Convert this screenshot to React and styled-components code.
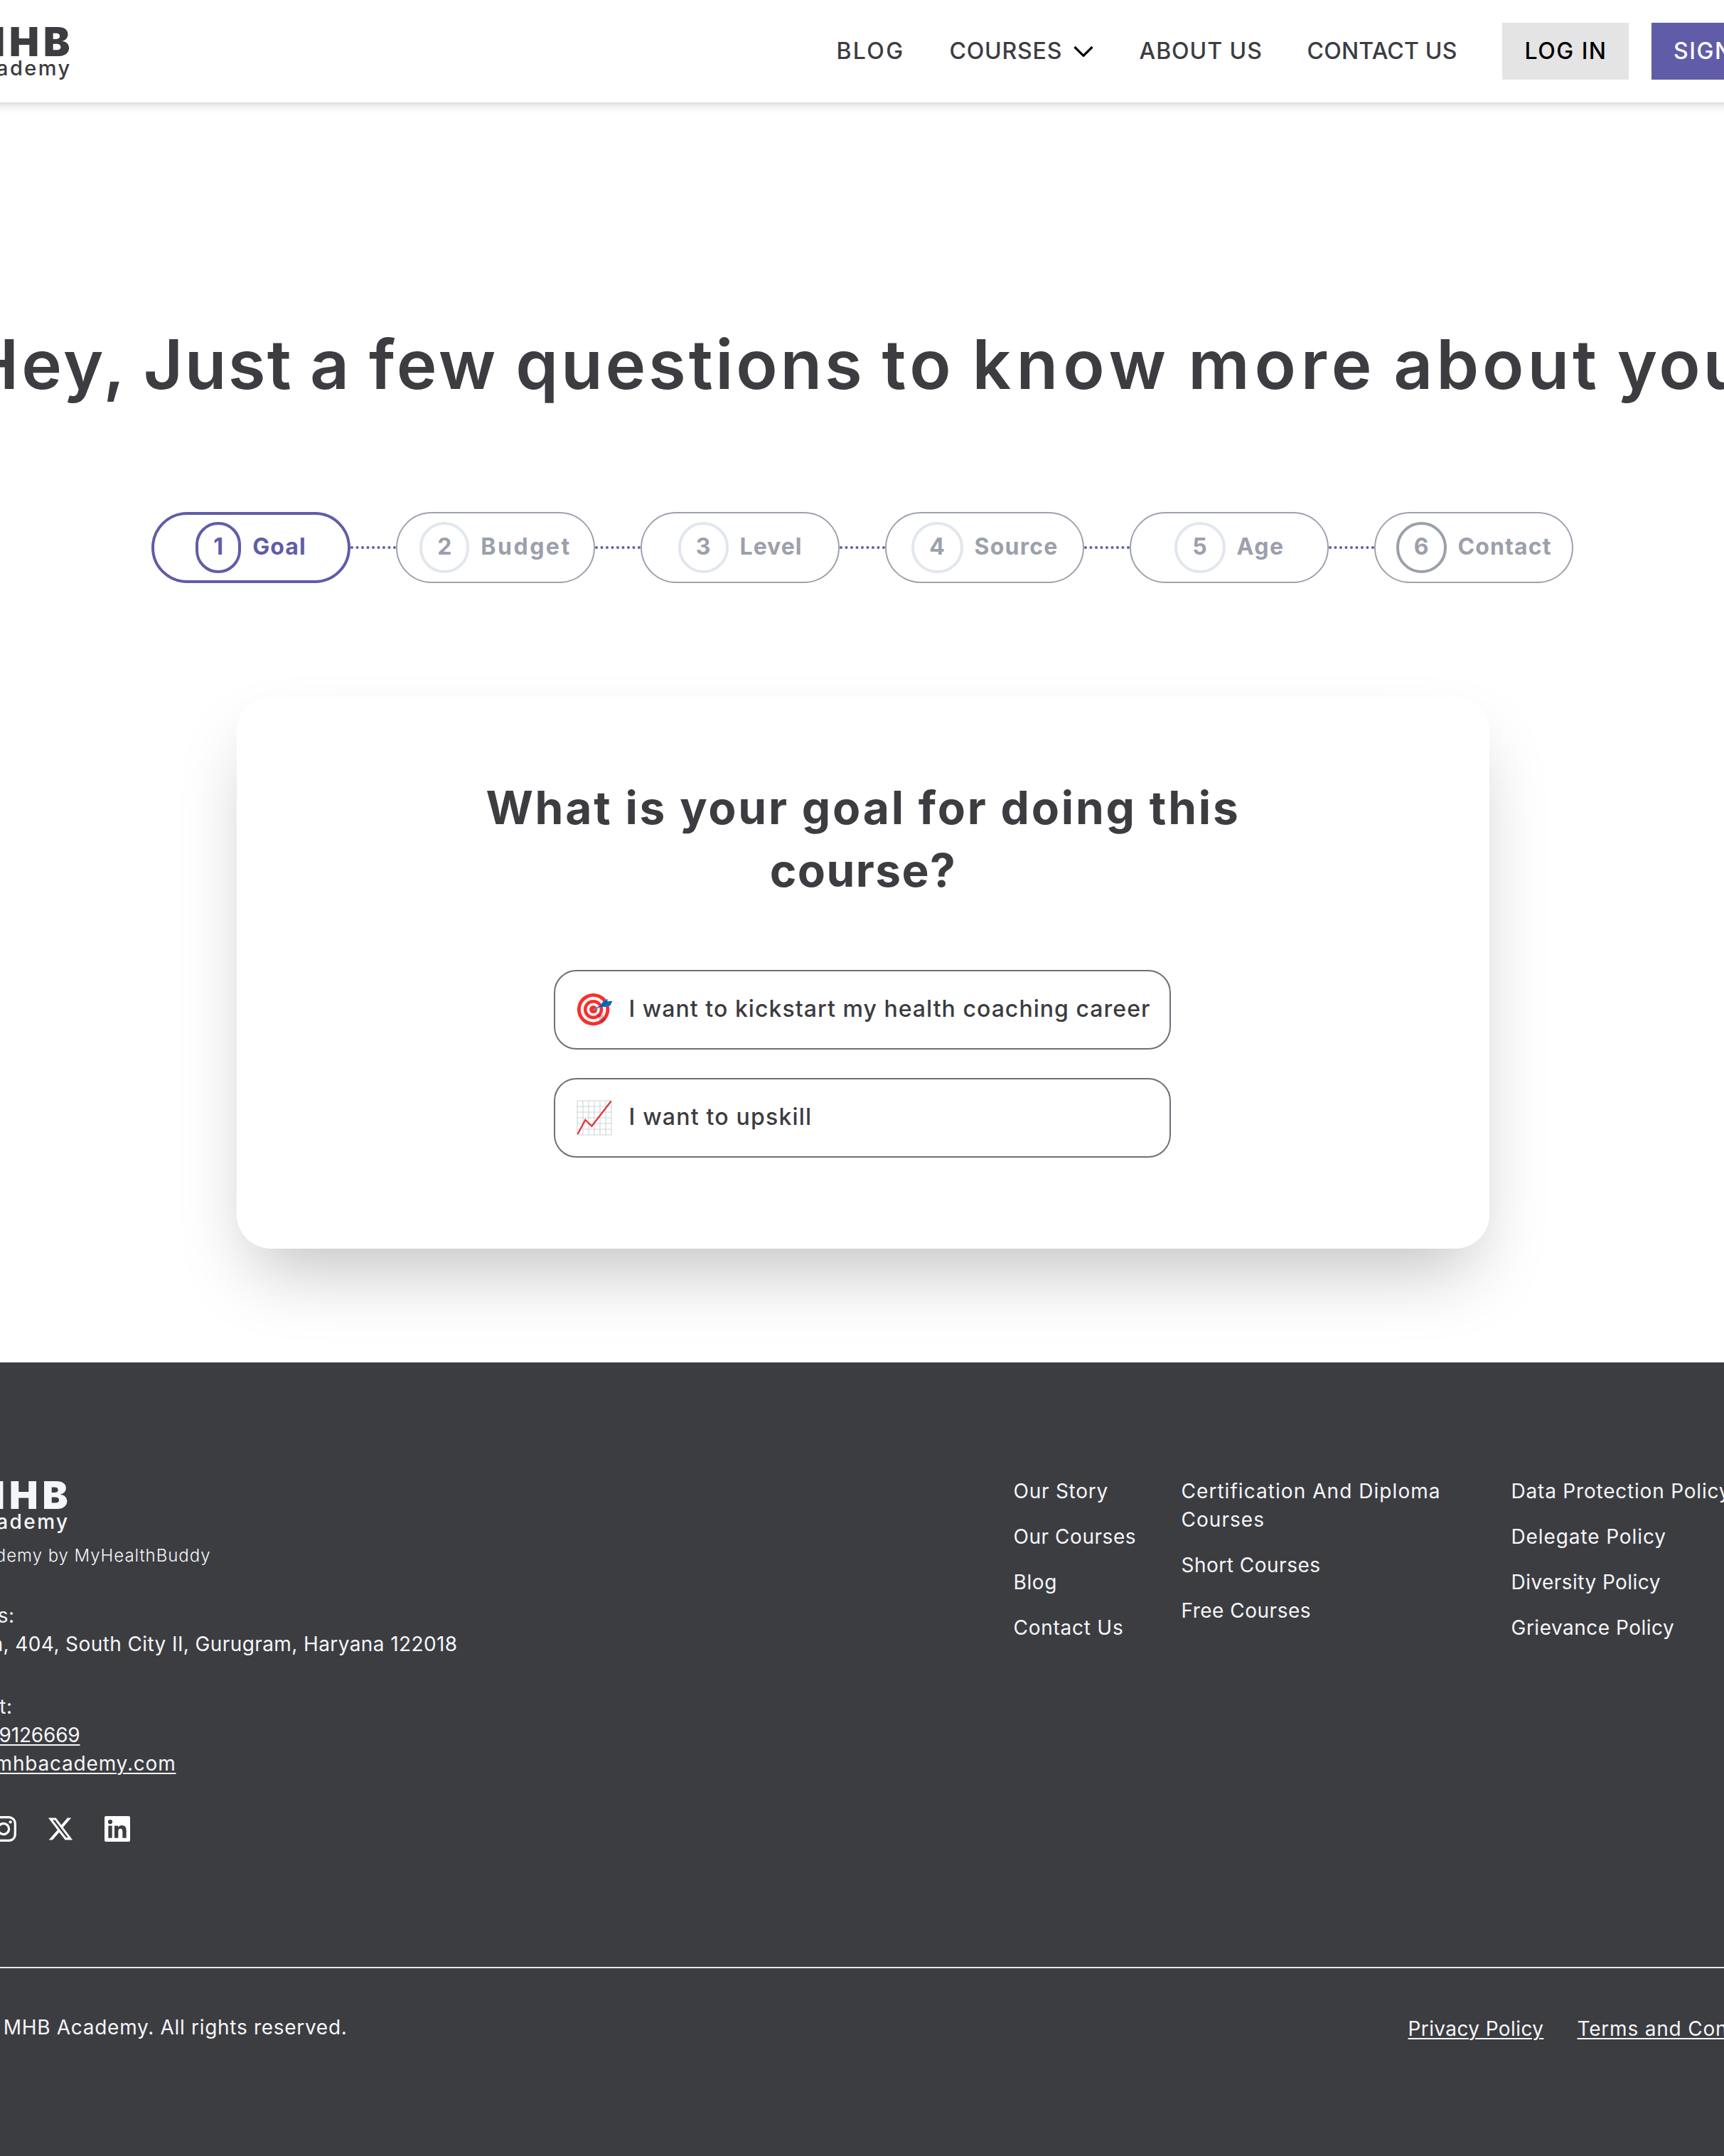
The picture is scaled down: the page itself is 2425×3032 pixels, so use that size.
import React from 'react'
import styled, {createGlobalStyle} from 'styled-components'
import {BiLogoFacebookCircle, BiLogoInstagram, BiLogoLinkedinSquare} from 'react-icons/bi'
import {FaXTwitter} from 'react-icons/fa6'

const GlobalStyle = createGlobalStyle`
  * {
    box-sizing: border-box;
  }

  body {
    margin: 0;
    color: #3c3c41;
    background: #fff;
    font-family: Inter, 'Open Sans', sans-serif;
    overflow-x: hidden;
  }
`

const Page = styled.div`
  display: flex;
  flex-direction: column;
  min-height: 3032px;
  overflow: hidden;
`

const Header = styled.header`
  display: flex;
  justify-content: center;
  height: 144px;
  margin: 0 -100px;
  background: #fff;
  box-shadow: 0 8px 12px -2px rgba(0, 0, 0, 0.1), 0 4px 8px -4px rgba(0, 0, 0, 0.1);
`

const Container = styled.div`
  flex: none;
  width: 2624px;
`

const HeaderInner = styled(Container)`
  display: flex;
  align-items: center;
  justify-content: space-between;
`

const Logo = styled.div`
  width: 197px;
  padding-top: 3px;
  text-align: right;
  white-space: nowrap;
  color: ${({color}) => color || '#3c3c41'};
`

const FooterLogo = styled(Logo)`
  width: 194px;
`

const LogoName = styled.div`
  margin-right: -7px;
  font-size: ${({size}) => size};
  line-height: 42px;
  font-weight: 900;
  letter-spacing: 6px;
`

const LogoSub = styled.div`
  margin: 2px -3px 0 0;
  font-size: ${({size}) => size};
  line-height: 28px;
  font-weight: 500;
  letter-spacing: 2.4px;
`

const Nav = styled.nav`
  display: flex;
  align-items: center;
  gap: 64px;
`

const NavLink = styled.a`
  display: flex;
  align-items: center;
  width: ${({width}) => width};
  padding: 0 0 1px 1px;
  font-size: 32px;
  line-height: 48px;
  font-weight: 500;
  letter-spacing: ${({track}) => track};
  white-space: nowrap;

  svg {
    margin: 2px 0 0 auto;
  }
`

const Buttons = styled.div`
  display: flex;
  gap: 32px;
`

const Button = styled.button`
  width: ${({width}) => width};
  height: 80px;
  margin: 0;
  padding: 0 0 1px 2px;
  border: 0;
  color: ${({primary}) => primary ? '#fff' : '#000'};
  background: ${({primary}) => primary ? '#605ca8' : '#e4e4e4'};
  font-family: inherit;
  font-size: 32px;
  font-weight: 500;
  letter-spacing: 1.5px;
`

const Main = styled.main`
  display: flex;
  flex-direction: column;
  align-items: center;
  padding: 310px 0 160px;
`

const Heading = styled.h1`
  margin: 0 0 150px;
  padding-right: 12px;
  font-size: 96px;
  line-height: 116px;
  font-weight: 600;
  letter-spacing: 3.8px;
  word-spacing: -4px;
  white-space: nowrap;
`

const Word = styled.span`
  letter-spacing: ${({track}) => track};
`

const Steps = styled.div`
  display: flex;
  align-items: center;
`

const Connector = styled.div`
  width: 64px;
  border-top: 4px dotted #605ca8;
`

const Pill = styled.div`
  display: flex;
  align-items: center;
  justify-content: center;
  gap: 16px;
  width: 280px;
  height: 100px;
  padding-left: 1px;
  border: ${({active}) => active ? '4px solid #605ca8' : '2px solid #9ca3af'};
  border-radius: 50px;
  color: ${({active}) => active ? '#605ca8' : '#9ca0ab'};
  font-size: 32px;
  font-weight: 700;
`

const Num = styled.span`
  display: flex;
  align-items: center;
  justify-content: center;
  width: ${({width}) => width};
  height: 72px;
  padding-bottom: 3px;
  border: 4px solid ${({ring}) => ring};
  border-radius: 36px;
`

const StepName = styled.span`
  padding-bottom: 3px;
  letter-spacing: ${({track}) => track};
  white-space: nowrap;
`

const Card = styled.section`
  display: flex;
  flex-direction: column;
  align-items: center;
  width: 1762px;
  height: 776px;
  margin: 160px 0 0 2px;
  padding-top: 112px;
  border-radius: 48px;
  background: #fff;
  box-shadow: 0 50px 100px -24px rgba(0, 0, 0, 0.25);
`

const Question = styled.h2`
  width: 1110px;
  margin: 0 0 96px;
  padding-left: 1px;
  font-size: 64px;
  line-height: 88px;
  font-weight: 700;
  letter-spacing: 2.8px;
  text-align: center;

  span {
    letter-spacing: 1.4px;
  }
`

const Options = styled.div`
  display: flex;
  flex-direction: column;
  gap: 40px;
  margin-right: 2px;
`

const Option = styled.div`
  display: flex;
  align-items: center;
  gap: 24px;
  width: 868px;
  height: 112px;
  padding-left: 30px;
  border: 2px solid #6b7078;
  border-radius: 32px;
  font-size: 32px;
  font-weight: 500;
  letter-spacing: ${({track}) => track};
  white-space: nowrap;

  span {
    padding-bottom: 3px;
  }
`

const Footer = styled.footer`
  display: flex;
  flex-direction: column;
  align-items: center;
  flex: 1;
  padding-top: 160px;
  color: #f5f6fa;
  background: #3c3d41;
  font-size: 28px;
  line-height: 40px;
`

const FooterTop = styled(Container)`
  display: flex;
  justify-content: space-between;
  height: 690px;
`

const Contacts = styled.div`
  padding-top: 3px;
`

const Tagline = styled.div`
  display: flex;
  justify-content: flex-end;
  width: 396px;
  margin: 18px 0 48px;
  font-size: 24px;
  line-height: 32px;
  font-weight: 300;
  letter-spacing: 0.95px;
  white-space: nowrap;
`

const Line = styled.div`
  display: flex;
  justify-content: flex-end;
  width: ${({end}) => end};
  letter-spacing: ${({track}) => track || '0.5px'};
  white-space: nowrap;
`

const Under = styled.a`
  text-decoration: underline;
  text-decoration-thickness: 2px;
  text-underline-offset: 3px;
`

const Group = styled.div`
  margin-bottom: 48px;
`

const Socials = styled.div`
  display: flex;
  gap: 32px;
`

const Social = styled.span`
  display: flex;
  align-items: center;
  justify-content: center;
  width: 48px;
  height: 48px;
  color: #fff;
`

const Columns = styled.div`
  display: grid;
  grid-template-columns: 172px 400px 399px;
  column-gap: 64px;
  padding-top: 1px;
`

const Column = styled.div`
  display: flex;
  flex-direction: column;
  gap: 24px;
`

const FooterLink = styled.a`
  letter-spacing: ${({track}) => track};
  white-space: ${({wrap}) => wrap ? 'normal' : 'nowrap'};
`

const FooterBottom = styled.div`
  display: flex;
  justify-content: center;
  width: 100%;
  border-top: 2px solid #e5ebf1;
`

const BottomRow = styled(Container)`
  display: flex;
  justify-content: space-between;
  padding-top: 63px;
`

const Copyright = styled.div`
  display: flex;
  justify-content: flex-end;
  width: 588px;
  letter-spacing: 0.7px;
  white-space: nowrap;
`

const Legal = styled.div`
  display: flex;
  gap: 48px;
  padding-top: 2px;
`

const LegalLink = styled(Under)`
  width: ${({width}) => width};
  letter-spacing: ${({track}) => track};
  white-space: nowrap;
`

const Chevron = () => (
  <svg width='28' height='17' viewBox='0 0 28 17' fill='none' stroke='#000' strokeWidth='3.2' strokeLinejoin='round'>
    <path d='M1.5 2L14 14.3L26.5 2' />
  </svg>
)

const Target = () => (
  <svg width='50' height='48' viewBox='0 0 50 48'>
    <circle cx='23.6' cy='23.6' r='22.7' fill='#f92f2b' />
    <circle cx='23.6' cy='23.6' r='17.8' fill='#fff' />
    <circle cx='23.6' cy='23.6' r='13.7' fill='#f92f2b' />
    <circle cx='23.6' cy='23.6' r='9.2' fill='#fff' />
    <circle cx='23.6' cy='23.6' r='5.6' fill='#f92f2b' />
    <path d='M24 24L31 31L37 31L41 38L36 43L32 39L31 34Z' fill='#7b1a4a' opacity='.32' />
    <path d='M23.5 24.5L35 18' stroke='#5c8fae' strokeWidth='2.4' />
    <path d='M32 20L37.5 12L43.5 8.8L43.5 13L50 12.4L47.6 18L41 20Z' fill='#0b6fc2' />
    <path d='M32 20L43.5 13L50 12.4' fill='none' stroke='#0a4d92' strokeWidth='1.2' />
  </svg>
)

const Chart = () => (
  <svg width='50' height='50' viewBox='0 0 50 50' fill='none'>
    <path
      d='M.7 1H49.3M.7 9H49.3M.7 17H49.3M.7 25H49.3M.7 33H49.3M.7 41H49.3M.7 49H49.3M1 1V49M9 1V49M17 1V49M25 1V49M33 1V49M41 1V49M49 1V49'
      stroke='#cdd5d7'
      strokeWidth='1.1'
    />
    <path d='M1.5 48L12.3 28L21.4 36.8L48.6 1.6' stroke='#de3b3d' strokeWidth='2.4' />
  </svg>
)

const steps = [
  {name: 'Goal', width: '64px', track: '1.1px', ring: '#605ca8'},
  {name: 'Budget', width: '70px', track: '2.5px', ring: '#e2e7ee'},
  {name: 'Level', width: '71px', track: '1px', ring: '#e2e7ee'},
  {name: 'Source', width: '73px', track: '1.2px', ring: '#e2e7ee'},
  {name: 'Age', width: '72px', track: '1.5px', ring: '#e2e7ee'},
  {name: 'Contact', width: '71px', track: '1.1px', ring: '#9ca0a9'}
]

const columns = [
  [['Our Story', '0.75px'], ['Our Courses', '0.55px'], ['Blog', '0.6px'], ['Contact Us', '0.75px']],
  [['Certification And Diploma Courses', '1.05px', true], ['Short Courses', '0.5px'], ['Free Courses', '0.5px']],
  [['Data Protection Policy', '0.8px'], ['Delegate Policy', '0.9px'], ['Diversity Policy', '0.45px'], ['Grievance Policy', '0.5px']]
]

const App = () => (
  <Page>
    <GlobalStyle />
    <Header>
      <HeaderInner>
        <Logo>
          <LogoName size='56px'>MHB</LogoName>
          <LogoSub size='29px'>Academy</LogoSub>
        </Logo>
        <Nav>
          <NavLink width='95px' track='2.3px'>BLOG</NavLink>
          <NavLink width='203px' track='0.8px'>COURSES<Chevron /></NavLink>
          <NavLink width='172px' track='0.95px'>ABOUT US</NavLink>
          <NavLink width='211px' track='0.2px'>CONTACT US</NavLink>
          <Buttons>
            <Button width='178px'>LOG IN</Button>
            <Button width='202px' primary='true'>SIGN UP</Button>
          </Buttons>
        </Nav>
      </HeaderInner>
    </Header>

    <Main>
      <Heading>
        Hey, <Word track='2.3px'>Just</Word> a few questions <Word track='5.8px'>to</Word>{' '}
        <Word track='7.2px'>know</Word> <Word track='6.8px'>more</Word> <Word track='4.9px'>about</Word> you
      </Heading>
      <Steps>
        {steps.map(({name, width, track, ring}, i) => (
          <React.Fragment key={name}>
            {i > 0 ? <Connector /> : null}
            <Pill active={i === 0 ? 'true' : undefined}>
              <Num width={width} ring={ring}>{i + 1}</Num>
              <StepName track={track}>{name}</StepName>
            </Pill>
          </React.Fragment>
        ))}
      </Steps>
      <Card>
        <Question>What is your goal for doing this <span>course?</span></Question>
        <Options>
          <Option track='1.04px'><Target /><span>I want to kickstart my health coaching career</span></Option>
          <Option track='1.2px'><Chart /><span>I want to upskill</span></Option>
        </Options>
      </Card>
    </Main>

    <Footer>
      <FooterTop>
        <Contacts>
          <FooterLogo color='#f5f6fa'>
            <LogoName size='54px'>MHB</LogoName>
            <LogoSub size='28px'>Academy</LogoSub>
          </FooterLogo>
          <Tagline>MHB Academy by MyHealthBuddy</Tagline>
          <Group>
            <Line end='120px'>Address:</Line>
            <Line end='743px' track='0.4px'>Plaza, 404, South City II, Gurugram, Haryana 122018</Line>
          </Group>
          <Group>
            <Line end='117px'>Contact:</Line>
            <Line end='212px' track='-0.2px'><Under>+91 9289126669</Under></Line>
            <Line end='347px' track='0.8px'><Under>info@mhbacademy.com</Under></Line>
          </Group>
          <Socials>
            <Social><BiLogoFacebookCircle size={48} /></Social>
            <Social><BiLogoInstagram size={48} /></Social>
            <Social><FaXTwitter size={38} /></Social>
            <Social><BiLogoLinkedinSquare size={48} /></Social>
          </Socials>
        </Contacts>
        <Columns>
          {columns.map((links, i) => (
            <Column key={i}>
              {links.map(([text, track, wrap]) => (
                <FooterLink key={text} track={track} wrap={wrap ? 'true' : undefined}>{text}</FooterLink>
              ))}
            </Column>
          ))}
        </Columns>
      </FooterTop>
      <FooterBottom>
        <BottomRow>
          <Copyright>© 2024 MHB Academy. All rights reserved.</Copyright>
          <Legal>
            <LegalLink width='190px' track='0.4px'>Privacy Policy</LegalLink>
            <LegalLink width='306px' track='0.8px'>Terms and Conditions</LegalLink>
          </Legal>
        </BottomRow>
      </FooterBottom>
    </Footer>
  </Page>
)

export default App
